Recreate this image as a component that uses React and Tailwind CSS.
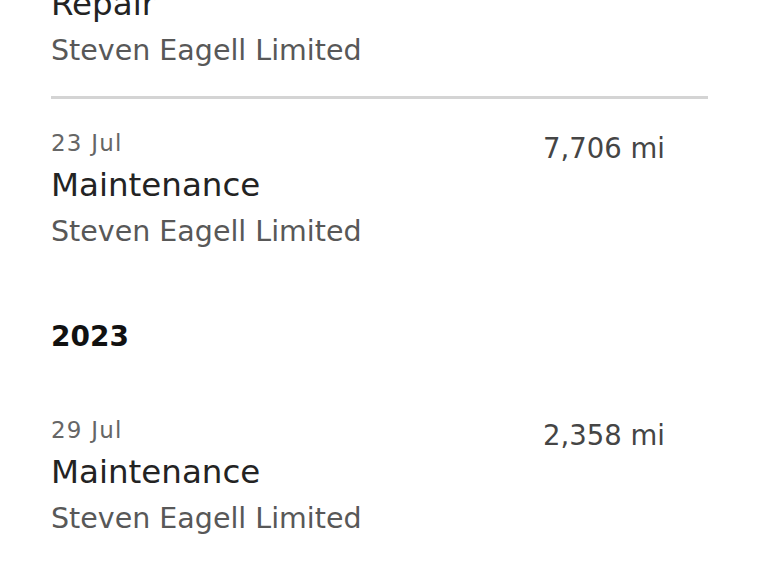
import React from "react";

function Entry({ date, title, sub, miles, className = "" }) {
  return (
    <div className={"flex justify-between pr-[43px] " + className}>
      <div className="flex flex-col">
        {date ? (
          <div className="text-[23px] leading-[32px] text-[#666666] tracking-[1.2px]">{date}</div>
        ) : null}
        <div className="text-[32.5px] leading-[52px] text-[#232323]">{title}</div>
        <div className="text-[28.5px] leading-[41px] text-[#585858]">{sub}</div>
      </div>
      {miles ? (
        <div className="mt-[5px] text-[27.5px] leading-[32px] text-[#454545]">{miles}</div>
      ) : null}
    </div>
  );
}

export default function App() {
  return (
    <div
      className="w-[759px] h-[569px] overflow-hidden bg-white px-[51px]"
      style={{ fontFamily: '"DejaVu Sans", sans-serif' }}
    >
      <Entry className="-mt-[22px]" title="Repair" sub="Steven Eagell Limited" />
      <div className="mt-[25px] h-[3px] bg-[#d4d4d4]" />
      <Entry className="mt-[28px]" date="23 Jul" title="Maintenance" sub="Steven Eagell Limited" miles="7,706 mi" />
      <div className="mt-[65px] text-[28px] leading-[40px] font-bold text-[#111111]">2023</div>
      <Entry className="mt-[57px]" date="29 Jul" title="Maintenance" sub="Steven Eagell Limited" miles="2,358 mi" />
    </div>
  );
}
